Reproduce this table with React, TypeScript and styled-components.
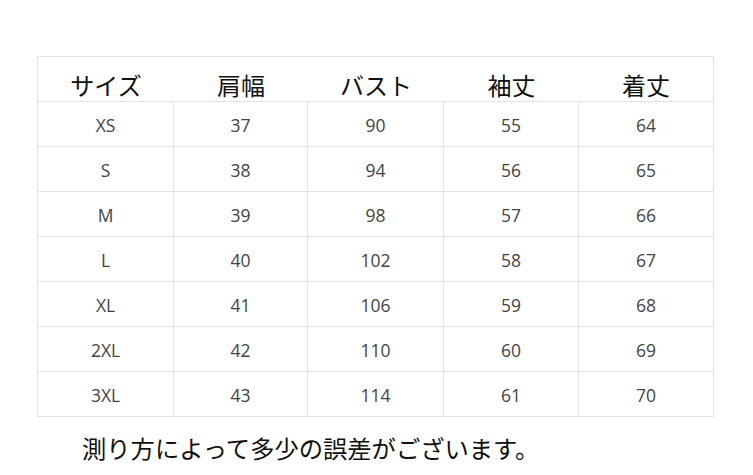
import React from "react";
import styled, { createGlobalStyle } from "styled-components";

const Global = createGlobalStyle`
  html, body { margin: 0; padding: 0; background: #ffffff; }
  body { font-family: "Noto Sans CJK JP", "Noto Sans", sans-serif; }
`;

const Page = styled.div`
  width: 753px;
  height: 475px;
  padding: 56px 0 0 37px;
  box-sizing: border-box;
  overflow: hidden;
`;

const Table = styled.div`
  width: 677px;
  box-sizing: border-box;
  border: 1px solid #e2e2e2;
`;

const Row = styled.div<{ $last?: boolean }>`
  display: grid;
  grid-template-columns: 136px 134px 136px 135px 134px;
  height: ${(p) => (p.$last ? 44 : 45)}px;
  box-sizing: border-box;
  border-bottom: ${(p) => (p.$last ? "none" : "1px solid #e2e2e2")};
`;

const HeadCell = styled.div`
  display: flex;
  align-items: center;
  justify-content: center;
  padding-top: 11px;
  box-sizing: border-box;
  font-family: "Noto Sans CJK JP", sans-serif;
  font-size: 24px;
  color: #111111;
  line-height: 1;
`;

const Cell = styled.div<{ $last?: boolean }>`
  display: flex;
  align-items: center;
  justify-content: center;
  padding-top: 2px;
  box-sizing: border-box;
  border-right: ${(p) => (p.$last ? "none" : "1px solid #e2e2e2")};
  font-family: "Open Sans", "Noto Sans", sans-serif;
  font-size: 17.5px;
  color: #444444;
`;

const Note = styled.div`
  margin: 15px 0 0 45px;
  font-family: "Noto Sans CJK JP", sans-serif;
  font-size: 24.3px;
  line-height: 32px;
  color: #111111;
`;

const headers = ["サイズ", "肩幅", "バスト", "袖丈", "着丈"];
const rows = [
  ["XS", "37", "90", "55", "64"],
  ["S", "38", "94", "56", "65"],
  ["M", "39", "98", "57", "66"],
  ["L", "40", "102", "58", "67"],
  ["XL", "41", "106", "59", "68"],
  ["2XL", "42", "110", "60", "69"],
  ["3XL", "43", "114", "61", "70"],
];

export default function App() {
  return (
    <>
      <Global />
      <Page>
        <Table>
          <Row>
            {headers.map((h) => (
              <HeadCell key={h}>{h}</HeadCell>
            ))}
          </Row>
          {rows.map((r, i) => (
            <Row key={r[0]} $last={i === rows.length - 1}>
              {r.map((c, j) => (
                <Cell key={j} $last={j === r.length - 1}>
                  {c}
                </Cell>
              ))}
            </Row>
          ))}
        </Table>
        <Note>測り方によって多少の誤差がございます。</Note>
      </Page>
    </>
  );
}
